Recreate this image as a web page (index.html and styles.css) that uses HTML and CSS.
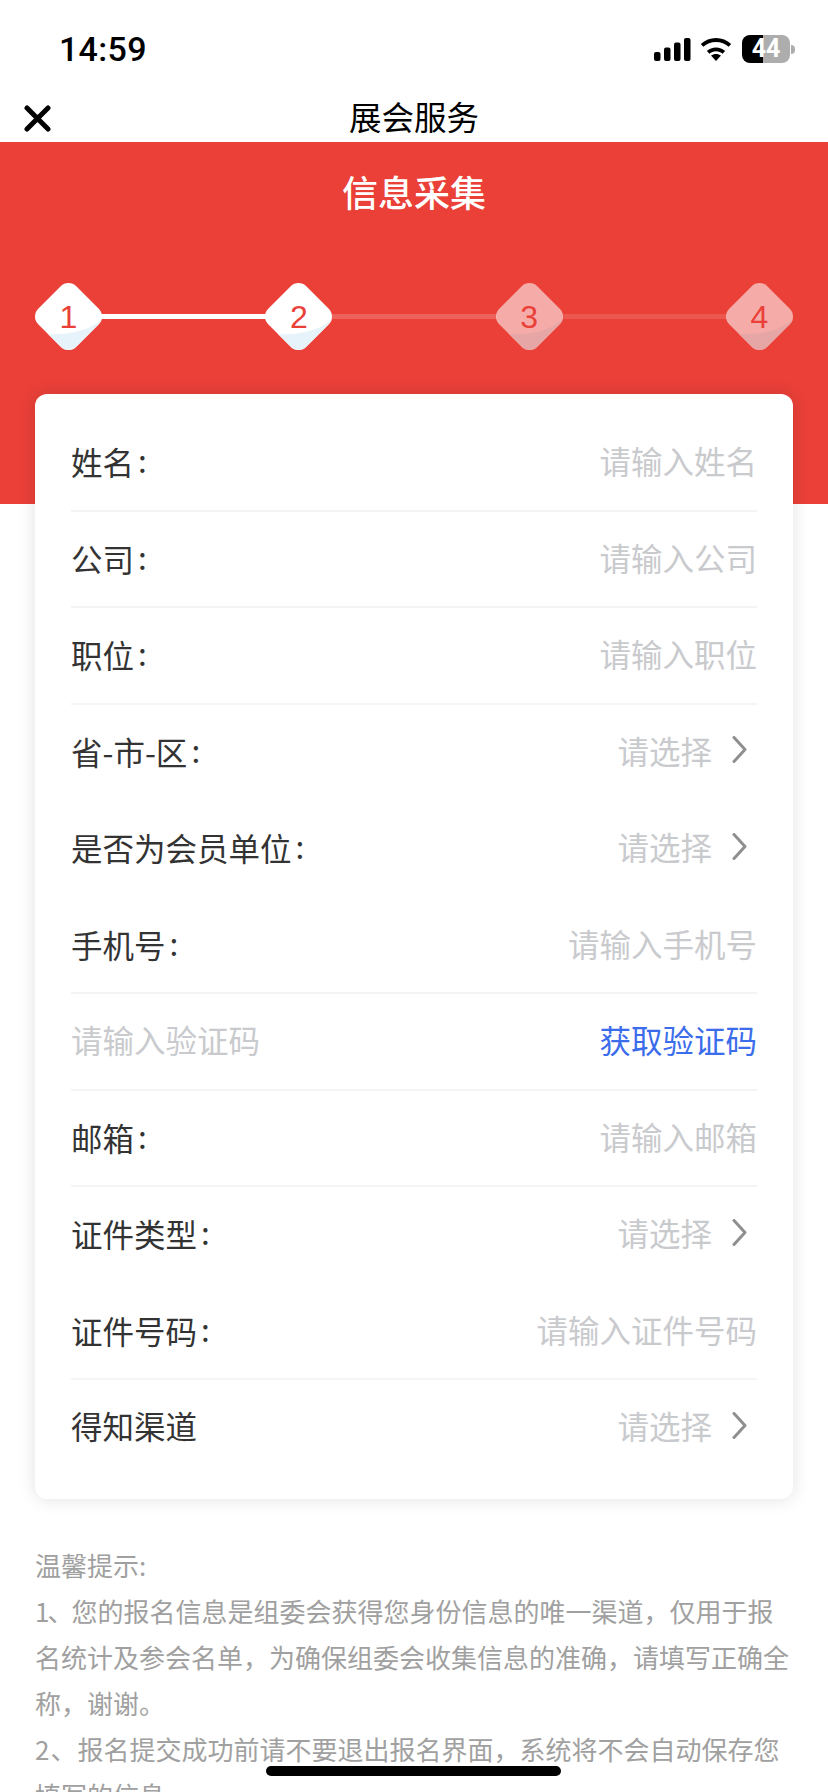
FILE: index.html
```html
<!DOCTYPE html>
<html lang="zh-CN">
<head>
<meta charset="utf-8">
<title>展会服务</title>
<link rel="stylesheet" href="styles.css">
</head>
<body>
<svg class="defs" aria-hidden="true">
  <defs>
    <clipPath id="diamond-clip"><rect x="6.6" y="6.6" width="53.8" height="53.8" rx="11" transform="rotate(45 33.5 33.5)"/></clipPath>
    <symbol id="diamond" viewBox="0 0 67 67">
      <g clip-path="url(#diamond-clip)">
        <rect width="67" height="67" fill="#fff"/>
        <path d="M68 35Q50 53 10 51V68H68Z" fill="#e6f3fa"/>
      </g>
    </symbol>
  </defs>
</svg>
<div class="page">
  <header class="status">
    <span class="time">14:59</span>
    <div class="status-icons">
      <svg class="signal" viewBox="0 0 37 23"><rect x="0" y="14" width="6.5" height="9" rx="2"/><rect x="10" y="9.500" width="6.500" height="13.500" rx="2"/><rect x="20" y="4.500" width="6.500" height="18.500" rx="2"/><rect x="30" y="0" width="6.500" height="23" rx="2"/></svg>
      <svg class="wifi" viewBox="0 0 32 23"><path d="M16 23l-5-5.400c2.900-2.300 7.100-2.300 10 0Z"/><path d="M16 9.500c3.500 0 6.700 1.300 9.100 3.500l-2.500 2.700c-1.700-1.500-4-2.500-6.600-2.500s-4.900 1-6.600 2.500L6.900 13c2.400-2.200 5.600-3.500 9.100-3.500Z"/><path d="M16 0c5.800 0 11.100 2.200 15.200 5.900l-2.600 2.800C25.300 5.700 20.900 3.900 16 3.900S6.700 5.700 3.400 8.700L.8 5.900C4.900 2.200 10.200 0 16 0Z"/></svg>
      <div class="battery"><div class="battery-body"><span class="battery-level">44</span></div><span class="battery-nib"></span></div>
    </div>
  </header>
  <nav class="navbar">
    <svg class="close" viewBox="0 0 27 27"><path d="M3 3L24 24M24 3L3 24"/></svg>
    <span class="nav-title">展会服务</span>
  </nav>
  <section class="hero">
    <h1 class="hero-title">信息采集</h1>
    <div class="steps">
      <div class="step"><svg class="step-bg"><use href="#diamond"/></svg><span class="step-num">1</span></div>
      <span class="line line-done"></span>
      <div class="step"><svg class="step-bg"><use href="#diamond"/></svg><span class="step-num">2</span></div>
      <span class="line line-next"></span>
      <div class="step step-todo"><svg class="step-bg"><use href="#diamond"/></svg><span class="step-num">3</span></div>
      <span class="line line-todo"></span>
      <div class="step step-todo"><svg class="step-bg"><use href="#diamond"/></svg><span class="step-num">4</span></div>
    </div>
  </section>
  <main class="card">
    <div class="row ruled"><span class="label">姓名<span class="colon">:</span></span><span class="hint">请输入姓名</span></div>
    <div class="row ruled"><span class="label">公司<span class="colon">:</span></span><span class="hint">请输入公司</span></div>
    <div class="row ruled"><span class="label">职位<span class="colon">:</span></span><span class="hint">请输入职位</span></div>
    <div class="row"><span class="label">省-市-区<span class="colon">:</span></span><span class="picker"><span class="hint">请选择</span><svg class="chevron" viewBox="0 0 15 27"><path d="M2 1.500L13 13.500L2 25.500"/></svg></span></div>
    <div class="row"><span class="label">是否为会员单位<span class="colon">:</span></span><span class="picker"><span class="hint">请选择</span><svg class="chevron" viewBox="0 0 15 27"><path d="M2 1.500L13 13.500L2 25.500"/></svg></span></div>
    <div class="row ruled"><span class="label">手机号<span class="colon">:</span></span><span class="hint">请输入手机号</span></div>
    <div class="row ruled"><span class="hint">请输入验证码</span><span class="code-link">获取验证码</span></div>
    <div class="row ruled"><span class="label">邮箱<span class="colon">:</span></span><span class="hint">请输入邮箱</span></div>
    <div class="row"><span class="label">证件类型<span class="colon">:</span></span><span class="picker"><span class="hint">请选择</span><svg class="chevron" viewBox="0 0 15 27"><path d="M2 1.500L13 13.500L2 25.500"/></svg></span></div>
    <div class="row ruled"><span class="label">证件号码<span class="colon">:</span></span><span class="hint">请输入证件号码</span></div>
    <div class="row"><span class="label">得知渠道</span><span class="picker"><span class="hint">请选择</span><svg class="chevron" viewBox="0 0 15 27"><path d="M2 1.500L13 13.500L2 25.500"/></svg></span></div>
  </main>
  <section class="tips">
    <p>温馨提示:</p>
    <p class="tip-one">1、您的报名信息是组委会获得您身份信息的唯一渠道，仅用于报名统计及参会名单，为确保组委会收集信息的准确，请填写正确全称，谢谢。</p>
    <p class="tip-two">2、报名提交成功前请不要退出报名界面，系统将不会自动保存您填写的信息。</p>
  </section>
  <div class="home-indicator"></div>
</div>
</body>
</html>
```

FILE: styles.css
```css
* { box-sizing: border-box; }
html, body { margin: 0; padding: 0; }
body {
  background: #fff;
  font-family: "Noto Sans CJK SC", "Noto Sans", sans-serif;
  color: #333;
}
.defs { width: 0; height: 0; display: block; }
.page {
  width: 828px;
  height: 1792px;
  overflow: hidden;
  position: relative;
}

/* status bar */
.status {
  height: 92px;
  padding: 6px 33px 0 59px;
  display: flex;
  justify-content: space-between;
  align-items: center;
}
.time {
  font-family: Roboto, "Liberation Sans", sans-serif;
  font-size: 34px;
  font-weight: 500;
  letter-spacing: 0.3px;
  color: #000;
}
.status-icons { display: flex; align-items: center; }
.signal { width: 37px; height: 23px; fill: #000; margin-right: 9px; }
.wifi { width: 32px; height: 23px; fill: #000; margin-right: 10px; }
.battery { display: flex; align-items: center; }
.battery-body {
  width: 48px;
  height: 28px;
  border-radius: 8px;
  background: linear-gradient(90deg, #000 0 21px, #adadad 21px);
  display: flex;
  align-items: center;
  justify-content: center;
}
.battery-level {
  font-family: Roboto, "Liberation Sans", sans-serif;
  font-size: 25px;
  font-weight: 700;
  color: #fff;
  line-height: 28px;
}
.battery-nib {
  width: 4px;
  height: 9px;
  margin-left: 1px;
  border-radius: 0 4px 4px 0;
  background: #adadad;
}

/* nav */
.navbar {
  height: 50px;
  padding: 0 24px;
  display: grid;
  grid-template-columns: 1fr auto 1fr;
  align-items: start;
}
.close { width: 27px; height: 27px; margin-top: 13px; }
.close path { fill: none; stroke: #000; stroke-width: 5; stroke-linecap: round; }
.nav-title {
  font-size: 32.500px;
  line-height: 50px;
  margin-top: -1px;
  color: #000;
}

/* hero */
.hero {
  height: 362px;
  background: #ea4038;
  padding: 23px 35px 0;
}
.hero-title {
  margin: 0;
  text-align: center;
  color: #fff;
  font-size: 36px;
  font-weight: 500;
  line-height: 52px;
}
.steps {
  margin-top: 66px;
  display: flex;
  align-items: center;
}
.step {
  width: 67px;
  height: 67px;
  flex: none;
  display: grid;
  place-items: center;
}
.step > * { grid-area: 1 / 1; }
.step-bg { width: 67px; height: 67px; display: block; }
.step-todo .step-bg { opacity: 0.57; }
.step-num {
  font-family: "Liberation Sans", Arial, sans-serif;
  font-size: 32px;
  line-height: 1;
  color: #ea4038;
  position: relative;
}
.line { flex: 1; height: 5px; margin: 0 -1px; }
.line-done { background: #fff; }
.line-next { background: rgba(255, 255, 255, 0.18); }
.line-todo { background: rgba(255, 255, 255, 0.12); }

/* form card */
.card {
  position: relative;
  margin: -110px 35px 0;
  padding: 21px 36px 22px;
  background: #fff;
  border-radius: 12px;
  box-shadow: 0 0 18px rgba(0, 0, 0, 0.12);
}
.row {
  height: 96.500px;
  display: flex;
  justify-content: space-between;
  align-items: center;
  font-size: 31.500px;
  padding-bottom: 6px;
}
.ruled { border-bottom: 2px solid #f4f4f4; padding-bottom: 4px; }
.label { color: #333; }
.colon { margin-left: 4px; vertical-align: 2px; }
.hint { color: #c9cacd; }
.code-link { color: #3b6ceb; }
.picker { display: flex; align-items: center; gap: 20px; padding-right: 10px; }
.chevron { width: 15px; height: 27px; }
.chevron path { fill: none; stroke: #8f8f8f; stroke-width: 3; stroke-linecap: round; stroke-linejoin: round; }

/* tips */
.tips {
  margin-top: 43px;
  padding: 0 35px;
  font-size: 26px;
  line-height: 46px;
  color: #a0a0a0;
}
.tips p { margin: 0; }
.tip-one::first-letter { letter-spacing: -2px; }
.tip-two::first-letter { letter-spacing: 1px; }

/* home indicator */
.home-indicator {
  position: absolute;
  left: 266px;
  top: 1766px;
  width: 295px;
  height: 10px;
  border-radius: 5px;
  background: #000;
}
```
